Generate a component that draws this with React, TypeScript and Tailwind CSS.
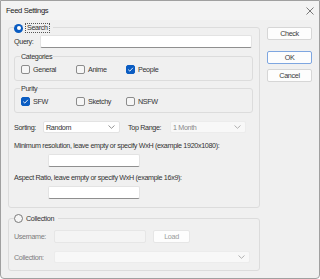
import React from "react";

const font = { fontFamily: '"Liberation Sans", Arial, sans-serif' };

const Check = ({ checked, label, className = "" }: { checked?: boolean; label: string; className?: string }) => (
  <div className={`flex items-center gap-[3px] ${className}`}>
    <div
      className={`w-[9px] h-[9px] rounded-[2px] flex items-center justify-center ${
        checked ? "bg-[#0a5cc2] border border-[#0a5cc2]" : "bg-[#f6f6f6] border border-[#8c8c8c]"
      }`}
    >
      {checked && (
        <svg width="7" height="7" viewBox="0 0 7 7">
          <path d="M1.2 3.6 L2.8 5.1 L5.9 1.8" stroke="white" strokeWidth="0.9" fill="none" />
        </svg>
      )}
    </div>
    <span>{label}</span>
  </div>
);

const Radio = ({ checked, label }: { checked?: boolean; label: string }) => (
  <div className="flex items-center gap-[2px] bg-[#f0f0f0] pr-[3px]">
    {checked ? (
      <div className="w-[9px] h-[9px] rounded-full bg-[#0a5cc2] flex items-center justify-center">
        <div className="w-[4px] h-[4px] rounded-full bg-white" />
      </div>
    ) : (
      <div className="w-[9px] h-[9px] rounded-full border border-[#7a7a7a] bg-[#f6f6f6]" />
    )}
    <span className={checked ? "border border-dotted border-[#555] px-[1px] leading-[8px]" : "px-[1px]"}>{label}</span>
  </div>
);

const Chevron = ({ color = "#7a7a7a" }: { color?: string }) => (
  <svg width="7" height="4" viewBox="0 0 7 4">
    <path d="M0.5 0.5 L3.5 3.3 L6.5 0.5" stroke={color} strokeWidth="0.8" fill="none" />
  </svg>
);

const TextBox = ({ className = "" }: { className?: string }) => (
  <div className={`h-[13px] bg-white border border-[#e3e3e3] border-b-[#8f8f8f] rounded-[2px] ${className}`} />
);

const Button = ({ label, focus, disabled, className = "" }: { label: string; focus?: boolean; disabled?: boolean; className?: string }) => (
  <div
    className={`h-[13px] rounded-[2px] flex items-center justify-center ${
      focus ? "border border-[#7ea6e0] bg-[#fdfdfd]" : "border border-[#d6d6d6] bg-[#fdfdfd]"
    } ${disabled ? "text-[#9a9a9a] bg-[#f9f9f9] border-[#e6e6e6]" : "text-[#3a3a3a]"} ${className}`}
  >
    {label}
  </div>
);

export default function App() {
  return (
    <div
      className="w-[320px] h-[279px] bg-[#f0f0f0] border border-[#a0a0a0] rounded-b-[4px] overflow-hidden text-[7.2px] leading-[9px] tracking-[-0.35px] text-[#333] whitespace-nowrap"
      style={font}
    >
      {/* title bar */}
      <div className="h-[19px] bg-[#f3f3f3] flex items-center justify-between pl-[5px] pr-[5px]">
        <span className="text-[7.6px] text-[#222]">Feed Settings</span>
        <svg width="8" height="8" viewBox="0 0 8 8">
          <path d="M0.5 0.5 L7.5 7.5 M7.5 0.5 L0.5 7.5" stroke="#444" strokeWidth="0.7" />
        </svg>
      </div>

      <div className="flex pl-[7px] pt-[7px] gap-[7px]">
        {/* left column */}
        <div className="w-[252px] flex flex-col">
          {/* Search group */}
          <div className="relative h-[181px] border border-[#dcdcdc] rounded-[3px] px-[5px]">
            <div className="absolute left-[5px] top-[-5px]">
              <Radio checked label="Search" />
            </div>
            <div className="flex items-center mt-[7px]">
              <span className="w-[26px]">Query:</span>
              <TextBox className="w-[212px]" />
            </div>

            <div className="relative mt-[8px] w-[239px] h-[25px] border border-[#dcdcdc] rounded-[3px]">
              <span className="absolute left-[5px] top-[-5px] bg-[#f0f0f0] px-[1px]">Categories</span>
              <div className="flex mt-[8px] pl-[6px]">
                <Check label="General" className="w-[55px]" />
                <Check label="Anime" className="w-[50px]" />
                <Check checked label="People" />
              </div>
            </div>

            <div className="relative mt-[7px] w-[239px] h-[25px] border border-[#dcdcdc] rounded-[3px]">
              <span className="absolute left-[5px] top-[-5px] bg-[#f0f0f0] px-[1px]">Purity</span>
              <div className="flex mt-[8px] pl-[6px]">
                <Check checked label="SFW" className="w-[55px]" />
                <Check label="Sketchy" className="w-[50px]" />
                <Check label="NSFW" />
              </div>
            </div>

            <div className="flex items-center mt-[8px]">
              <span className="w-[29px]">Sorting:</span>
              <div className="w-[77px] h-[12px] bg-white border border-[#e3e3e3] rounded-[2px] flex items-center justify-between pl-[2px] pr-[4px]">
                <span>Random</span>
                <Chevron />
              </div>
              <span className="ml-[8px] w-[42px]">Top Range:</span>
              <div className="w-[76px] h-[12px] bg-[#f8f8f8] border border-[#ececec] rounded-[2px] flex items-center justify-between pl-[2px] pr-[4px] text-[#8a8a8a]">
                <span>1 Month</span>
                <Chevron color="#a0a0a0" />
              </div>
            </div>

            <div className="mt-[8px]">Minimum resolution, leave empty or specify WxH (example 1920x1080):</div>
            <TextBox className="w-[92px] ml-[34px] mt-[4px]" />

            <div className="mt-[6px]">Aspect Ratio, leave empty or specify WxH (example 16x9):</div>
            <TextBox className="w-[92px] ml-[34px] mt-[4px]" />
          </div>

          {/* Collection group */}
          <div className="relative mt-[10px] h-[53px] border border-[#dcdcdc] rounded-[3px] px-[5px]">
            <div className="absolute left-[5px] top-[-5px]">
              <Radio label="Collection" />
            </div>
            <div className="flex items-center mt-[11px] text-[#7d7d7d]">
              <span className="w-[40px]">Username:</span>
              <div className="w-[92px] h-[13px] bg-[#f4f4f4] border border-[#e6e6e6] rounded-[2px]" />
              <Button label="Load" disabled className="w-[37px] ml-[7px]" />
            </div>
            <div className="flex items-center mt-[8px] text-[#7d7d7d]">
              <span className="w-[40px]">Collection:</span>
              <div className="w-[196px] h-[12px] bg-[#f8f8f8] border border-[#ececec] rounded-[2px] flex items-center justify-end pr-[4px]">
                <Chevron color="#a0a0a0" />
              </div>
            </div>
          </div>
        </div>

        {/* right buttons */}
        <div className="flex flex-col w-[45px]">
          <Button label="Check" className="w-[45px]" />
          <Button label="OK" focus className="w-[45px] mt-[11px]" />
          <Button label="Cancel" className="w-[45px] mt-[5px]" />
        </div>
      </div>
    </div>
  );
}
